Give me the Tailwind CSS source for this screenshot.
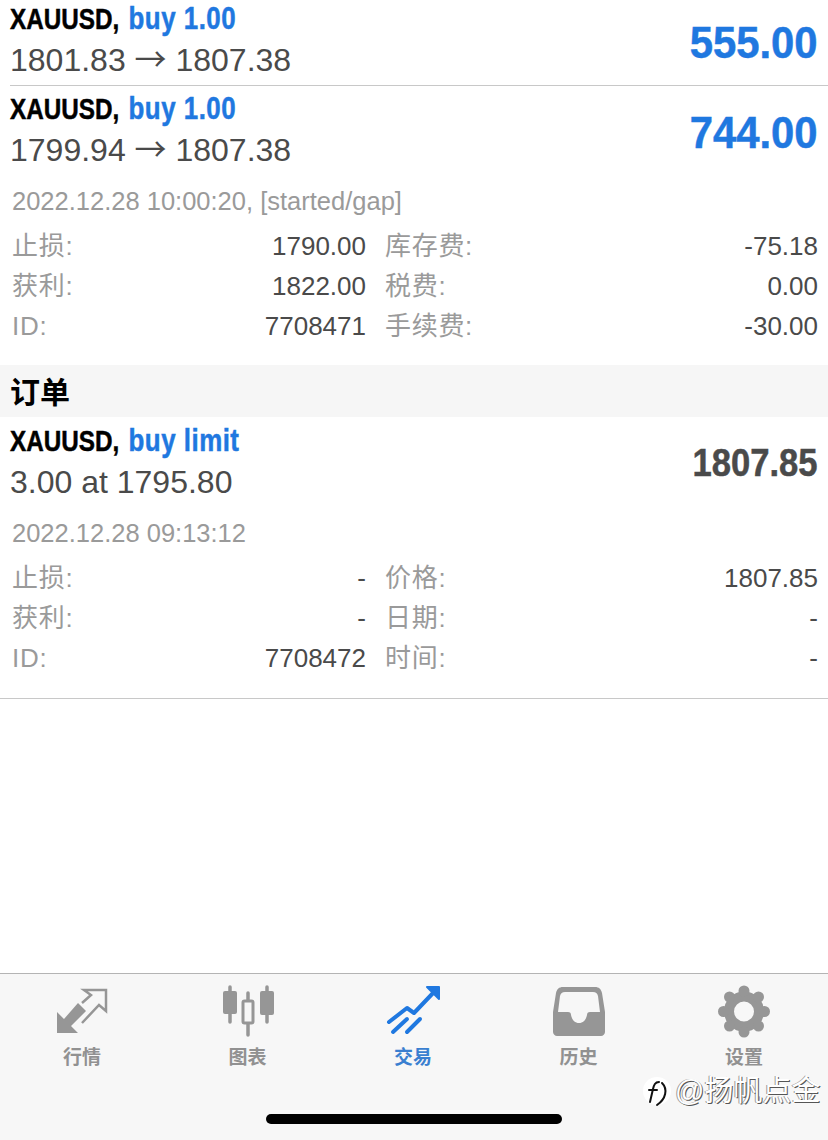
<!DOCTYPE html>
<html lang="zh">

<head>
    <meta charset="UTF-8">
    <meta name="viewport" content="width=device-width, initial-scale=1.0">
    <script src="https://cdn.jsdelivr.net/npm/@tailwindcss/browser@4"></script>
    <title>Trade</title>
</head>

<body class="bg-white overflow-hidden font-['Liberation_Sans','Noto_Sans_CJK_SC',sans-serif]">
    <div class="relative w-[828px] h-[1140px] flex flex-col overflow-hidden">
        <main class="flex-1 min-h-0 -mt-1">

            <!-- Positions -->
            <section class="ml-[10px] h-[90px] border-b border-[#c8c8c8] flex justify-between pr-[10px]">
                <div class="pt-[3px]">
                    <div class="h-[41px] leading-[38px] text-[30px] font-bold text-black [-webkit-text-stroke:0.5px] origin-left scale-x-[0.81] whitespace-nowrap">XAUUSD, <span class="ml-[3px] text-[32px] tracking-[0.6px] text-[#1f78e0]">buy 1.00</span></div>
                    <div class="h-[41px] leading-[41px] text-[32px] text-[#4a4a4a] whitespace-nowrap">1801.83 <span class="leading-[0] font-['Noto_Sans_CJK_SC']">→</span> 1807.38</div>
                </div>
                <div class="pt-[20px] h-[90px] leading-[54px] text-[45px] font-bold text-[#1f78e0] [-webkit-text-stroke:0.5px] origin-right scale-x-[0.93] whitespace-nowrap">555.00</div>
            </section>

            <section>
                <div class="ml-[10px] flex justify-between pr-[10px]">
                    <div class="pt-[3px]">
                        <div class="h-[41px] leading-[38px] text-[30px] font-bold text-black [-webkit-text-stroke:0.5px] origin-left scale-x-[0.81] whitespace-nowrap">XAUUSD, <span class="ml-[3px] text-[32px] tracking-[0.6px] text-[#1f78e0]">buy 1.00</span></div>
                        <div class="h-[41px] leading-[41px] text-[32px] text-[#4a4a4a] whitespace-nowrap">1799.94 <span class="leading-[0] font-['Noto_Sans_CJK_SC']">→</span> 1807.38</div>
                    </div>
                    <div class="pt-[20px] leading-[54px] text-[45px] font-bold text-[#1f78e0] [-webkit-text-stroke:0.5px] origin-right scale-x-[0.93] whitespace-nowrap">744.00</div>
                </div>
                <div class="ml-3 mt-[10px] h-[40px] leading-[40px] text-[25.5px] text-[#9a9a9a] whitespace-nowrap">2022.12.28 10:00:20, [started/gap]</div>
                <div class="mt-[5px] grid grid-cols-[354px_433px] gap-x-[19px] pl-3 text-[26px] leading-[40px] text-[#9a9a9a]">
                    <div class="flex justify-between"><span class="tracking-[0.7px]">止损:</span><span class="text-[#4a4a4a]">1790.00</span></div>
                    <div class="flex justify-between"><span class="tracking-[0.7px]">库存费:</span><span class="text-[#4a4a4a]">-75.18</span></div>
                    <div class="flex justify-between"><span class="tracking-[0.7px]">获利:</span><span class="text-[#4a4a4a]">1822.00</span></div>
                    <div class="flex justify-between"><span class="tracking-[0.7px]">税费:</span><span class="text-[#4a4a4a]">0.00</span></div>
                    <div class="flex justify-between"><span class="tracking-[0.7px]">ID:</span><span class="text-[#4a4a4a]">7708471</span></div>
                    <div class="flex justify-between"><span class="tracking-[0.7px]">手续费:</span><span class="text-[#4a4a4a]">-30.00</span></div>
                </div>
            </section>

            <!-- Orders -->
            <h2 class="mt-[19px] h-[52px] leading-[56px] pl-[10px] bg-[#f6f6f6] text-[30px] font-bold text-black">订单</h2>

            <section class="h-[282px] border-b border-[#c8c8c8]">
                <div class="pl-[10px] flex justify-between pr-[10px]">
                    <div class="pt-[4px]">
                        <div class="h-[41px] leading-[38px] text-[30px] font-bold text-black [-webkit-text-stroke:0.5px] origin-left scale-x-[0.81] whitespace-nowrap">XAUUSD, <span class="ml-[3px] text-[32px] tracking-[0.6px] text-[#1f78e0]">buy limit</span></div>
                        <div class="h-[41px] leading-[41px] text-[32px] text-[#4a4a4a] whitespace-nowrap">3.00 at 1795.80</div>
                    </div>
                    <div class="pt-[19px] pr-px leading-[54px] text-[38px] font-bold text-[#4a4a4a] [-webkit-text-stroke:0.5px] origin-right scale-x-[0.91] whitespace-nowrap">1807.85</div>
                </div>
                <div class="ml-3 mt-[10px] h-[40px] leading-[40px] text-[25.5px] text-[#9a9a9a] whitespace-nowrap">2022.12.28 09:13:12</div>
                <div class="mt-[5px] grid grid-cols-[354px_433px] gap-x-[19px] pl-3 text-[26px] leading-[40px] text-[#9a9a9a]">
                    <div class="flex justify-between"><span class="tracking-[0.7px]">止损:</span><span class="text-[#4a4a4a]">-</span></div>
                    <div class="flex justify-between"><span class="tracking-[0.7px]">价格:</span><span class="text-[#4a4a4a]">1807.85</span></div>
                    <div class="flex justify-between"><span class="tracking-[0.7px]">获利:</span><span class="text-[#4a4a4a]">-</span></div>
                    <div class="flex justify-between"><span class="tracking-[0.7px]">日期:</span><span class="text-[#4a4a4a]">-</span></div>
                    <div class="flex justify-between"><span class="tracking-[0.7px]">ID:</span><span class="text-[#4a4a4a]">7708472</span></div>
                    <div class="flex justify-between"><span class="tracking-[0.7px]">时间:</span><span class="text-[#4a4a4a]">-</span></div>
                </div>
            </section>
        </main>

        <!-- Tab bar -->
        <nav class="h-[167px] shrink-0 bg-[#f7f7f7] border-t border-[#b4b4b4] flex justify-between pl-[52px] pr-[54px] pt-[10px]">
            <div class="w-[60px] flex flex-col items-center">
                <svg class="w-[52px] h-[54px]" viewBox="0 0 52 54" fill="none">
                    <path d="M1 49V28L8 35L22 19L30 27L15 42L22 49Z" fill="#969696" />
                    <path d="M26 19L35 11L28 6H50V27L43 21L26 39" stroke="#969696" stroke-width="2.5" />
                </svg>
                <span class="mt-[7px] text-[19px] leading-[26px] font-bold text-[#919191] whitespace-nowrap">行情</span>
            </div>
            <div class="w-[60px] flex flex-col items-center">
                <svg class="w-[52px] h-[54px]" viewBox="0 0 52 54" fill="none">
                    <path d="M8 3V38M45 3V38M26 9V51" stroke="#969696" stroke-width="3.5" stroke-linecap="round" />
                    <rect x="1" y="7" width="14" height="23" rx="2" fill="#969696" />
                    <rect x="38" y="7" width="14" height="24" rx="2" fill="#969696" />
                    <rect x="21" y="17" width="10" height="22" rx="1.5" fill="#f7f7f7" stroke="#969696" stroke-width="3" />
                </svg>
                <span class="mt-[7px] text-[19px] leading-[26px] font-bold text-[#919191] whitespace-nowrap">图表</span>
            </div>
            <div class="w-[60px] flex flex-col items-center">
                <svg class="w-[54px] h-[54px]" viewBox="0 0 54 54" fill="none">
                    <path d="M3 38L21 24L28 29L48 8" stroke="#1f78e0" stroke-width="4" stroke-linecap="round" stroke-linejoin="round" />
                    <path d="M41 3H53V15Z" fill="#1f78e0" stroke="#1f78e0" stroke-width="2" stroke-linejoin="round" />
                    <path d="M7 48L21 35M21 48L34 35" stroke="#1f78e0" stroke-width="4" stroke-linecap="round" />
                </svg>
                <span class="mt-[7px] text-[19px] leading-[26px] font-bold text-[#3a7fd0] whitespace-nowrap">交易</span>
            </div>
            <div class="w-[60px] flex flex-col items-center">
                <svg class="w-[52px] h-[54px]" viewBox="0 0 52 54" fill="none">
                    <path fill-rule="evenodd" d="M10 3H42C46 3 48 5 49 9L52 28V48C52 50 50 52 48 52H4C2 52 0 50 0 48V28L3 9C4 5 6 3 10 3ZM12 8C9 8 8 9 7 12L5 28H15C17 28 18 29 18 31C19 36 22 39 26 39C30 39 33 36 34 31C34 29 35 28 37 28H47L45 12C44 9 43 8 40 8Z" fill="#969696" />
                </svg>
                <span class="mt-[7px] text-[19px] leading-[26px] font-bold text-[#919191] whitespace-nowrap">历史</span>
            </div>
            <div class="w-[60px] flex flex-col items-center">
                <svg class="w-[52px] h-[54px]" viewBox="0 0 52 54" fill="none">
                    <circle cx="26" cy="27.5" r="15" stroke="#969696" stroke-width="10" />
                    <path d="M26 7h0M26 48h0M5.500 27.500h0M46.500 27.500h0M11.500 13h0M40.500 13h0M11.500 42h0M40.500 42h0" stroke="#969696" stroke-width="11" stroke-linecap="round" />
                </svg>
                <span class="mt-[7px] text-[19px] leading-[26px] font-bold text-[#919191] whitespace-nowrap">设置</span>
            </div>
        </nav>

        <!-- Home indicator -->
        <div class="absolute left-[266px] top-[1114px] w-[296px] h-[10px] rounded-full bg-black"></div>

        <!-- Watermark -->
        <div class="absolute left-[642px] top-[1073px] flex items-center h-[36px]">
            <svg class="w-[30px] h-[34px] shrink-0" viewBox="0 0 30 34" fill="none">
                <circle cx="15" cy="17" r="14" fill="#ffffff" />
                <path d="M17 8C13 8 12 11 11 15L8 28M7 16H15M20 9C26 15 24 25 15 31" stroke="#111111" stroke-width="2" stroke-linecap="round" />
            </svg>
            <span class="ml-[3px] text-[29px] leading-[36px] text-white whitespace-nowrap [text-shadow:1px_1px_0_#555555,-1px_0_0_#999999]">@扬帆点金</span>
        </div>
    </div>
</body>

</html>
